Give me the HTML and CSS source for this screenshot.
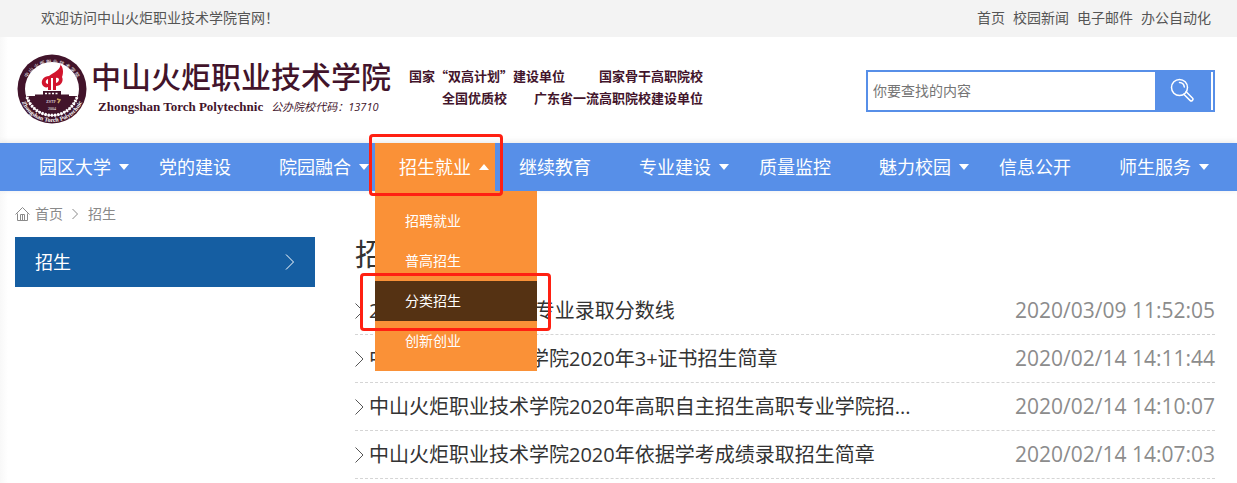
FILE: index.html
```
<!DOCTYPE html>
<html lang="zh-CN">
<head>
<meta charset="utf-8">
<meta name="viewport" content="width=device-width, initial-scale=1">
<title>招生 - 中山火炬职业技术学院</title>
<link rel="stylesheet" href="styles.css">
</head>
<body>
<div class="topbar">
  <span>欢迎访问中山火炬职业技术学院官网！</span>
  <div class="topbar-links">
    <a href="#">首页</a><a href="#">校园新闻</a><a href="#">电子邮件</a><a href="#">办公自动化</a>
  </div>
</div>

<header class="header">
  <a class="brand" href="#">
    <svg class="emblem" viewBox="0 0 70 70" role="img" aria-label="校徽">
      <defs>
        <path id="arc-top" d="M6.500 38A28.500 28.500 0 1 1 63.500 38"/>
        <path id="arc-bottom" d="M2 35A33 33 0 0 0 68 35"/>
      </defs>
      <circle cx="35" cy="35" r="34.500" fill="#42142b"/>
      <circle cx="35" cy="35" r="27" fill="#fff"/>
      <path d="M10 42H18V40.500H26V37H44V40.500H52V42H60A26 26 0 0 1 10 42Z" fill="#42142b"/>
      <path d="M10 43A26.200 26.200 0 0 0 60 43" fill="none" stroke="#fff" stroke-width="3" stroke-dasharray="2 1.200"/>
      <path d="M43 10C45 15 36 19 32 22C27 22 24 26 25 30C26 33 29 34 31 33V36H34V24H36V36H39V32C44 32 47 27 45 23C47 18 46 13 43 10ZM31 25V30C28 30 28 26 31 25ZM39 24C43 23 43 28 39 29Z" fill="#d2142d"/>
      <path d="M28 39.500H42" stroke="#fff" stroke-width="1.500" stroke-dasharray="2 1.500"/>
      <text x="34" y="49" class="emblem-code">ZSTP</text>
      <text x="35" y="56" class="emblem-code">2004</text>
      <path d="M40 45L43 46L41 49" fill="none" stroke="#c6a15c" stroke-width="1.500"/>
      <text class="emblem-zh"><textPath href="#arc-top" startOffset="50%">中 山 火 炬 职 业 技 术 学 院</textPath></text>
      <text class="emblem-en"><textPath href="#arc-bottom" startOffset="50%">Zhongshan Torch Polytechnic</textPath></text>
    </svg>
    <span class="brand-names">
      <span class="brand-zh">中山火炬职业技术学院</span>
      <span class="brand-sub"><span class="brand-en">Zhongshan Torch Polytechnic</span><span class="brand-code">公办院校代码：13710</span></span>
    </span>
  </a>
  <div class="honors">
    <p><span>国家“双高计划”建设单位</span><span>国家骨干高职院校</span></p>
    <p><span>全国优质校</span><span>广东省一流高职院校建设单位</span></p>
  </div>
  <form class="search">
    <input type="text" placeholder="你要查找的内容" aria-label="搜索内容">
    <button type="button" aria-label="搜索">
      <svg width="24" height="24" viewBox="0 0 24 24" fill="none" stroke="#fff" stroke-width="1.500" stroke-linecap="round" stroke-linejoin="round">
        <circle cx="9.500" cy="9.500" r="8"/>
        <path d="M9.500 4.500A5 5 0 0 1 14.300 9"/>
        <path d="M13.800 16.200L20 22.400A1.500 1.500 0 0 0 22.400 20L16.200 13.800"/>
      </svg>
    </button>
  </form>
</header>

<nav class="nav">
  <ul class="nav-list">
    <li><a href="#">园区大学<i class="caret"></i></a></li>
    <li><a href="#">党的建设</a></li>
    <li><a href="#">院园融合<i class="caret"></i></a></li>
    <li class="open">
      <a href="#">招生就业<i class="caret caret-up"></i></a>
      <ul class="submenu">
        <li><a href="#">招聘就业</a></li>
        <li><a href="#">普高招生</a></li>
        <li class="selected"><a href="#">分类招生</a><span class="mark mark-sub"></span></li>
        <li><a href="#">创新创业</a></li>
      </ul>
      <span class="mark mark-top"></span>
    </li>
    <li><a href="#">继续教育</a></li>
    <li><a href="#">专业建设<i class="caret"></i></a></li>
    <li><a href="#">质量监控</a></li>
    <li><a href="#">魅力校园<i class="caret"></i></a></li>
    <li><a href="#">信息公开</a></li>
    <li><a href="#">师生服务<i class="caret"></i></a></li>
  </ul>
</nav>

<main class="page">
  <div class="crumbs">
    <svg width="16" height="16" viewBox="0 0 16 16" fill="none" stroke="#8a8a8a">
      <path d="M.500 8.500L7.500 1.500L14.500 8.500M2.500 7.500V14.500H12.500V7.500M5.500 14V8.500H9.500V14M7.500 9V14"/>
    </svg>
    <a href="#">首页</a>
    <svg width="8" height="12" viewBox="0 0 8 12" fill="none" stroke="#8a8a8a"><path d="M1.500 1L6.500 6L1.500 11"/></svg>
    <a href="#">招生</a>
  </div>
  <div class="columns">
    <aside class="side">
      <a class="side-link" href="#">招生
        <svg width="10" height="16" viewBox="0 0 10 16" fill="none" stroke="#fff"><path d="M1 .500L8.500 8L1 15.500"/></svg>
      </a>
    </aside>
    <section class="content">
      <h1>招生</h1>
      <ul class="news">
        <li>
          <svg class="chev" viewBox="0 0 9 16"><path d="M.500 .500L8 8L.500 15.500"/></svg>
          <a href="#">2019年高职招生各专业录取分数线</a><time>2020/03/09 11:52:05</time>
        </li>
        <li>
          <svg class="chev" viewBox="0 0 9 16"><path d="M.500 .500L8 8L.500 15.500"/></svg>
          <a href="#">中山火炬职业技术学院2020年3+证书招生简章</a><time>2020/02/14 14:11:44</time>
        </li>
        <li>
          <svg class="chev" viewBox="0 0 9 16"><path d="M.500 .500L8 8L.500 15.500"/></svg>
          <a href="#">中山火炬职业技术学院2020年高职自主招生高职专业学院招...</a><time>2020/02/14 14:10:07</time>
        </li>
        <li>
          <svg class="chev" viewBox="0 0 9 16"><path d="M.500 .500L8 8L.500 15.500"/></svg>
          <a href="#">中山火炬职业技术学院2020年依据学考成绩录取招生简章</a><time>2020/02/14 14:07:03</time>
        </li>
      </ul>
    </section>
  </div>
</main>
</body>
</html>
```
FILE: styles.css
```
* { box-sizing: border-box; }
body, ul, p, h1 { margin: 0; padding: 0; }
ul { list-style: none; }
a { color: inherit; text-decoration: none; }
svg { flex: none; }

body {
  background: linear-gradient(to right, #f8f8f8, #fff 8px);
  color: #333;
  font: 14px/20px "Open Sans", "Noto Sans CJK SC", sans-serif;
}

.topbar {
  display: flex;
  justify-content: space-between;
  padding: 8px 26px 9px 41px;
  background: #f3f3f3;
  color: #555;
}
.topbar-links { display: flex; gap: 8px; }

.header {
  display: flex;
  align-items: flex-start;
  padding: 16px 22px 17px 17px;
  color: #42142b;
}
.brand { display: flex; gap: 4px; }
.emblem { width: 70px; height: 70px; margin-top: 1px; }
.emblem text { fill: #fff; text-anchor: middle; }
.emblem-code { font: 4px "Liberation Serif", serif; }
.emblem-zh { font: 5px "Noto Sans CJK SC", sans-serif; }
.emblem-en { font: bold 6px "Liberation Serif", serif; }
.brand-names { display: flex; flex-direction: column; width: 302px; }
.brand-zh { font: 500 30px/44px "Noto Sans CJK SC", sans-serif; }
.brand-sub { display: flex; align-items: center; gap: 8px; padding-left: 7px; line-height: 20px; white-space: nowrap; }
.brand-en { font-family: "Liberation Serif", serif; font-weight: bold; font-size: 13px; }
.brand-code { font-style: italic; font-size: 11px; }

.honors { padding: 12px 0 0 16px; font: bold 13px/22px "Noto Sans CJK SC", sans-serif; }
.honors p { display: flex; justify-content: flex-end; gap: 27px; }
.honors p:first-child { gap: 34px; }

.search {
  display: flex;
  width: 349px;
  height: 42px;
  margin: 17px 0 14px auto;
  padding-right: 2px;
  border: 2px solid #578fe8;
  background: #fff;
}
.search input {
  flex: 1;
  min-width: 0;
  padding: 0 5px;
  border: 0;
  outline: 0;
  background: none;
  font: inherit;
}
.search input::placeholder { color: #757575; opacity: 1; }
.search button {
  display: grid;
  place-items: center;
  width: 56px;
  padding: 0 2px 2px 0;
  border: 0;
  background: #578fe8;
}

.nav {
  padding: 0 22px 0 15px;
  background: #578fe8;
  box-shadow: 0 -1px 6px rgba(0, 0, 0, .1);
  color: #fff;
  font-size: 18px;
}
.nav-list { display: grid; grid-template-columns: repeat(10, 1fr); }
.nav-list > li { position: relative; }
.nav-list > li > a {
  display: flex;
  align-items: center;
  gap: 8px;
  height: 48px;
  padding-left: 24px;
  white-space: nowrap;
}
.open { z-index: 2; background: #fa9137; }
.caret { border: 5px solid transparent; border-top: 6px solid #fff; border-bottom: 0; }
.caret-up { border-top: 0; border-bottom: 6px solid #fff; }

.submenu {
  position: absolute;
  top: 100%;
  left: 0;
  width: 162px;
  padding: 10px 0;
  background: #fa9137;
  font-size: 14px;
}
.submenu li { position: relative; }
.submenu a { display: block; padding-left: 30px; line-height: 40px; }
.selected { background: #553213; }
.mark {
  position: absolute;
  border: 3px solid #ff2012;
  border-radius: 4px;
  pointer-events: none;
}
.mark-top { inset: -9px -8px -5px -6px; }
.mark-sub { inset: -8px -14px -10px -15px; }

.page { padding: 0 22px 0 15px; }
.crumbs {
  display: flex;
  align-items: center;
  gap: 4px;
  padding: 13px 0;
  color: #8a8a8a;
}
.crumbs a + svg { margin: 0 5px 0 4px; }
.columns { display: flex; gap: 40px; }
.side { width: 300px; }
.side-link {
  display: flex;
  align-items: center;
  justify-content: space-between;
  height: 50px;
  padding: 0 20px;
  background: #155ea2;
  color: #fff;
  font-size: 18px;
}
.content { flex: 1; min-width: 0; }
.content h1 { font-size: 30px; font-weight: 400; line-height: 34px; padding-bottom: 16px; }
.news li {
  display: flex;
  align-items: center;
  gap: 5px;
  border-bottom: 1px dashed #d5d5d5;
  font-size: 20px;
  line-height: 47px;
}
.chev { width: 9px; height: 16px; fill: none; stroke: #555; }
.news a { flex: 1; min-width: 0; white-space: nowrap; overflow: hidden; text-overflow: ellipsis; }
.news time { color: #8c8c8c; font-size: 21px; }
```
